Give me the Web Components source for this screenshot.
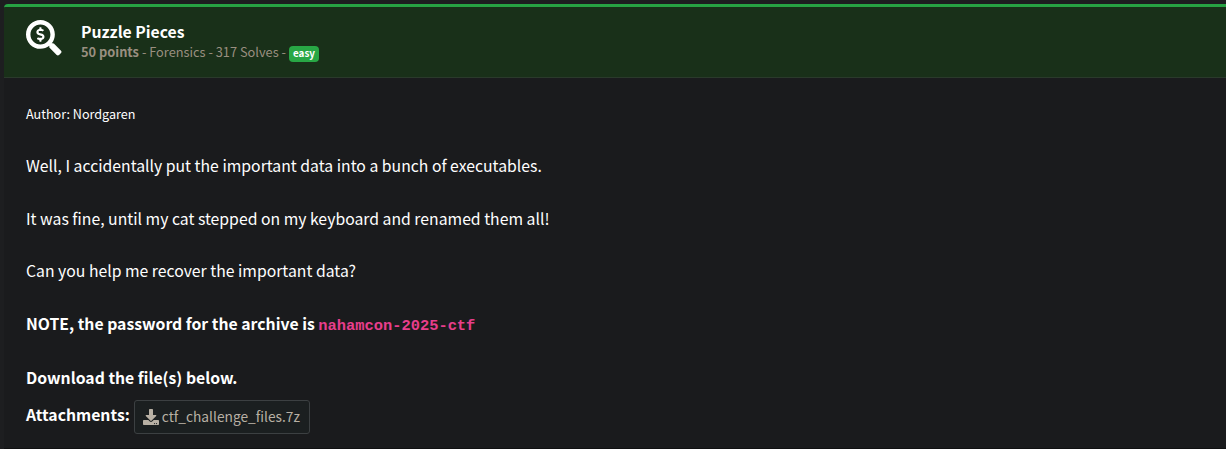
<!DOCTYPE html>
<html lang="en">
<head>
<meta charset="utf-8">
<title>Puzzle Pieces</title>
<style>
html,body{margin:0;height:100%;overflow:hidden;background:#1d1e20}
body{font-family:"Noto Sans CJK SC","Noto Sans CJK JP",sans-serif;color:#fff}
</style>
</head>
<body>
<challenge-card>
  <challenge-header slot="header" name="Puzzle Pieces" points="50 points" meta="- Forensics - 317 Solves -" level="easy"></challenge-header>
  <challenge-line style="--size:12.6px;--gap:32px">Author: Nordgaren</challenge-line>
  <challenge-line>Well, I accidentally put the important data into a bunch of executables.</challenge-line>
  <challenge-line style="--gap:32px">It was fine, until my cat stepped on my keyboard and renamed them all!</challenge-line>
  <challenge-line>Can you help me recover the important data?</challenge-line>
  <challenge-line style="--weight:700;--gap:34px">NOTE, the password for the archive is <inline-code>nahamcon-2025-ctf</inline-code></challenge-line>
  <challenge-line style="--weight:700">Download the file(s) below.</challenge-line>
  <file-attachment label="Attachments:">ctf_challenge_files.7z</file-attachment>
</challenge-card>
<script>
const define = (name, html) => customElements.define(name, class extends HTMLElement {
  constructor() {
    super();
    this.attachShadow({mode: 'open'}).innerHTML = html;
  }
  connectedCallback() {
    this.shadowRoot.querySelectorAll('[data-attr]').forEach(el => {
      el.textContent = this.getAttribute(el.dataset.attr);
    });
  }
});

define('challenge-card', `<style>
:host{display:block;box-sizing:border-box;height:449px;padding:4px 0 0 4px}
.card{box-sizing:border-box;height:445px;background:#1a1b1d;border-top:3px solid #27a243;border-top-left-radius:4px;border-bottom:1px solid #101112;overflow:hidden}
.body{display:flex;flex-direction:column;align-items:flex-start;padding:26px 22px 0}
</style><div class="card"><slot name="header"></slot><div class="body"><slot></slot></div></div>`);

define('challenge-header', `<style>
:host{display:flex;box-sizing:border-box;height:71px;padding:13px 22px 0;background:#193019;border-bottom:1px solid #2a3a2b}
svg{width:35.5px;height:35.5px;flex:none;margin-right:19.5px}
.title{font-size:15.75px;font-weight:700;line-height:24px;height:22px;white-space:nowrap}
.meta{display:flex;align-items:center;gap:3px;font-size:12.8px;line-height:20px;color:#998f80;white-space:nowrap}
.badge{background:#28a745;color:#fff;font-weight:700;font-size:9.9px;line-height:14px;height:16px;padding:0 4px;border-radius:4px;margin-top:3px}
</style>
<svg viewBox="0 0 512 512" fill="#fff"><path d="M505.04 442.66l-99.71-99.69c-4.5-4.5-10.6-7-17-7h-16.3c27.6-35.3 44-79.69 44-127.99C416.03 93.09 322.92 0 208.02 0S0 93.09 0 207.98s93.11 207.98 208.02 207.98c48.3 0 92.71-16.4 128.01-44v16.3c0 6.4 2.5 12.5 7 17l99.71 99.69c9.4 9.4 24.6 9.4 33.9 0l28.3-28.3c9.4-9.4 9.4-24.59.1-33.99zm-297.02-90.7c-79.54 0-144-64.34-144-143.98 0-79.53 64.35-143.98 144-143.98 79.54 0 144 64.34 144 143.98 0 79.53-64.35 143.98-144 143.98zm27.11-152.54l-45.01-13.5c-5.16-1.55-8.77-6.78-8.77-12.73 0-7.27 5.3-13.19 11.8-13.19h28.1c4.56 0 8.96 1.29 12.82 3.72 3.24 2.03 7.36 1.91 10.13-.73l11.75-11.21c3.53-3.37 3.33-9.21-.57-12.14-9.1-6.83-20.08-10.77-31.37-11.35V112c0-4.42-3.58-8-8-8h-16c-4.42 0-8 3.58-8 8v16.12c-23.63.63-42.68 20.55-42.68 45.07 0 19.97 12.99 37.81 31.58 43.39l45.01 13.5c5.16 1.55 8.77 6.78 8.77 12.73 0 7.27-5.3 13.19-11.8 13.19h-28.1c-4.56 0-8.96-1.29-12.82-3.72-3.24-2.03-7.36-1.91-10.13.73l-11.75 11.21c-3.53 3.37-3.33 9.21.57 12.14 9.1 6.83 20.08 10.77 31.37 11.35V304c0 4.42 3.58 8 8 8h16c4.42 0 8-3.58 8-8v-16.12c23.63-.63 42.68-20.54 42.68-45.07 0-19.97-12.99-37.81-31.59-43.39z"/></svg>
<div><div class="title" data-attr="name"></div><div class="meta"><b data-attr="points"></b><span data-attr="meta"></span><span class="badge" data-attr="level"></span></div></div>`);

define('challenge-line', `<style>
:host{display:block;font-size:var(--size,15.77px);font-weight:var(--weight,400);line-height:20px;height:20px;margin-bottom:var(--gap,33px);white-space:nowrap}
</style><slot></slot>`);

define('inline-code', `<style>
:host{display:inline;font-family:"Liberation Mono",monospace;font-size:15.4px;font-weight:700;color:#e83e8c}
</style><slot></slot>`);

define('file-attachment', `<style>
:host{display:flex;align-items:center;height:34px;margin-top:-21px;white-space:nowrap}
b{font-size:15.75px;line-height:30px;margin-right:4px;margin-top:-4px}
a{box-sizing:border-box;display:flex;align-items:center;gap:3px;height:34px;padding:0 9px 0 8px;border:1px solid #3c4042;border-radius:3px;background:#1b1f20;color:#b8b0a4;font-size:13.75px;line-height:30px}
a span{margin-top:-2px}
svg{width:16px;height:16px;flex:none}
</style><b data-attr="label"></b><a><svg viewBox="0 0 512 512" fill="currentColor"><path d="M216 0h80c13.3 0 24 10.7 24 24v168h87.7c17.8 0 26.7 21.5 14.1 34.1L269.7 378.3c-7.5 7.5-19.8 7.5-27.3 0L90.1 226.1c-12.6-12.6-3.7-34.1 14.1-34.1H192V24c0-13.3 10.7-24 24-24zm296 376v112c0 13.3-10.7 24-24 24H24c-13.3 0-24-10.7-24-24V376c0-13.3 10.7-24 24-24h146.7l49 49c20.1 20.1 52.5 20.1 72.6 0l49-49H488c13.3 0 24 10.7 24 24zm-124 88c0-11-9-20-20-20s-20 9-20 20 9 20 20 20 20-9 20-20zm64 0c0-11-9-20-20-20s-20 9-20 20 9 20 20 20 20-9 20-20z"/></svg><span><slot></slot></span></a>`);
</script>
</body>
</html>
